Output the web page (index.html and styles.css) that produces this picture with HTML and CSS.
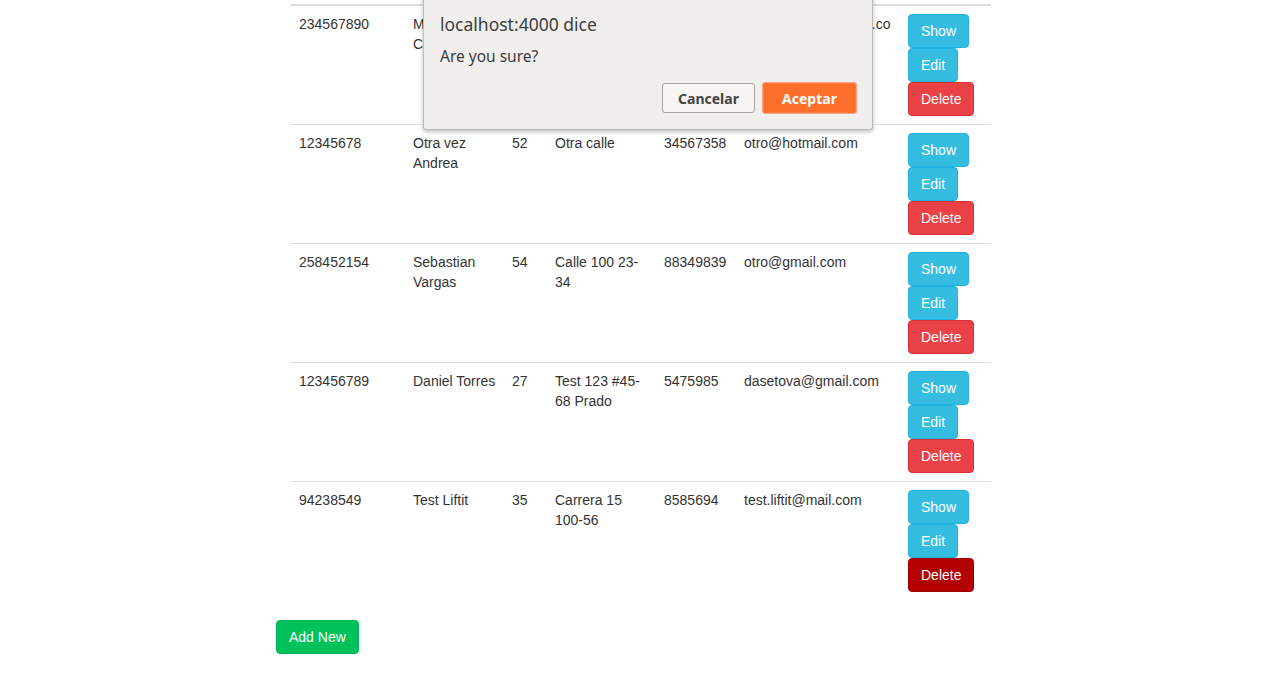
FILE: index.html
```html
<!DOCTYPE html>
<html lang="es">
<head>
<meta charset="utf-8">
<title>Users</title>
<link rel="stylesheet" href="styles.css">
</head>
<body>
<div class="container">
  <table class="table">
    <colgroup>
      <col class="c-id"><col class="c-name"><col class="c-age"><col class="c-addr"><col class="c-phone"><col class="c-mail"><col class="c-act">
    </colgroup>
    <tbody>
      <tr>
        <td>234567890</td><td>Mario Castaño</td><td>31</td><td>Calle 80 12-45</td><td>3124567</td><td>mario.icardona@liftit.co</td>
        <td><div class="actions"><a class="btn btn-info">Show</a><a class="btn btn-info">Edit</a><a class="btn btn-danger">Delete</a></div></td>
      </tr>
      <tr>
        <td>12345678</td><td>Otra vez Andrea</td><td>52</td><td>Otra calle</td><td>34567358</td><td>otro@hotmail.com</td>
        <td><div class="actions"><a class="btn btn-info">Show</a><a class="btn btn-info">Edit</a><a class="btn btn-danger">Delete</a></div></td>
      </tr>
      <tr>
        <td>258452154</td><td>Sebastian Vargas</td><td>54</td><td>Calle 100 23-34</td><td>88349839</td><td>otro@gmail.com</td>
        <td><div class="actions"><a class="btn btn-info">Show</a><a class="btn btn-info">Edit</a><a class="btn btn-danger">Delete</a></div></td>
      </tr>
      <tr>
        <td>123456789</td><td>Daniel Torres</td><td>27</td><td>Test 123 #45-68 Prado</td><td>5475985</td><td>dasetova@gmail.com</td>
        <td><div class="actions"><a class="btn btn-info">Show</a><a class="btn btn-info">Edit</a><a class="btn btn-danger">Delete</a></div></td>
      </tr>
      <tr>
        <td>94238549</td><td>Test Liftit</td><td>35</td><td>Carrera 15 100-56</td><td>8585694</td><td>test.liftit@mail.com</td>
        <td><div class="actions"><a class="btn btn-info">Show</a><a class="btn btn-info">Edit</a><a class="btn btn-danger active">Delete</a></div></td>
      </tr>
    </tbody>
  </table>
  <a class="btn btn-success">Add New</a>
</div>

<div class="dialog" role="alertdialog">
  <div class="dialog-title">localhost:4000 dice</div>
  <div class="dialog-msg">Are you sure?</div>
  <div class="dialog-buttons">
    <button class="dbtn dbtn-cancel">Cancelar</button>
    <button class="dbtn dbtn-ok">Aceptar</button>
  </div>
</div>
</body>
</html>
```
FILE: styles.css
```css
* { box-sizing: border-box; }
html, body { margin: 0; padding: 0; }
body {
  background: #fff;
  font-family: "Liberation Sans", Arial, sans-serif;
  font-size: 14px;
  line-height: 20px;
  color: #333;
}
.container {
  width: 729px;
  margin: 0 auto;
  padding-top: 4px;
  padding-bottom: 20px;
}
.table {
  width: 700px;
  margin: 0 14px 20px 15px;
  border-collapse: collapse;
  table-layout: fixed;
}
.c-id { width: 114px; }
.c-name { width: 99px; }
.c-age { width: 43px; }
.c-addr { width: 109px; }
.c-phone { width: 80px; }
.c-mail { width: 164px; }
.c-act { width: 91px; }
.table td {
  padding: 8px;
  vertical-align: top;
  border-top: 1px solid #ddd;
  overflow: hidden;
  white-space: normal;
}
.table tr:first-child td { border-top: 2px solid #ddd; }
.actions {
  display: flex;
  flex-direction: column;
  align-items: flex-start;
}
.btn {
  display: inline-block;
  padding: 6px 12px;
  font-size: 14px;
  line-height: 20px;
  border: 1px solid transparent;
  border-radius: 4px;
  color: #fff;
  text-decoration: none;
  cursor: pointer;
}
.btn-info { background: #35bde1; border-color: #1fb2dc; }
.btn-danger { background: #e94145; border-color: #d8303a; }
.btn-danger.active { background: #b30000; border-color: #a00000; }
.btn-success { background: #00c25a; border-color: #00b553; padding: 6px 12.5px 6px 12px; }

.dialog {
  position: absolute;
  left: 423px;
  top: -10px;
  width: 450px;
  height: 140px;
  background: #f0efed;
  border: 1px solid #bdbbb8;
  border-top: none;
  border-radius: 0 0 3px 3px;
  box-shadow: 0 2px 4px rgba(0,0,0,0.25);
  padding: 20px 15px 0 16px;
  font-family: "Noto Sans", "Open Sans", sans-serif;
  color: #3c3c3c;
}
.dialog-title {
  font-size: 17.5px;
  line-height: 24px;
  margin-top: 2px;
}
.dialog-msg {
  font-size: 15.5px;
  line-height: 20px;
  margin-top: 10px;
}
.dialog-buttons {
  display: flex;
  justify-content: flex-end;
  align-items: center;
  gap: 7px;
  margin-top: 16px;
}
.dbtn {
  font-family: "Noto Sans", "Open Sans", sans-serif;
  font-size: 14px;
  font-weight: bold;
  border-radius: 3px;
  padding: 0;
  cursor: pointer;
}
.dbtn-cancel {
  width: 93px;
  height: 30px;
  background: #f6f5f4;
  border: 1px solid #a6a5a3;
  color: #444;
}
.dbtn-ok {
  width: 95px;
  height: 32px;
  background: #fe6f2b;
  border: 1px solid #f8a280;
  box-shadow: inset 0 0 0 1px #fd7a3c;
  color: #fff;
}
```
